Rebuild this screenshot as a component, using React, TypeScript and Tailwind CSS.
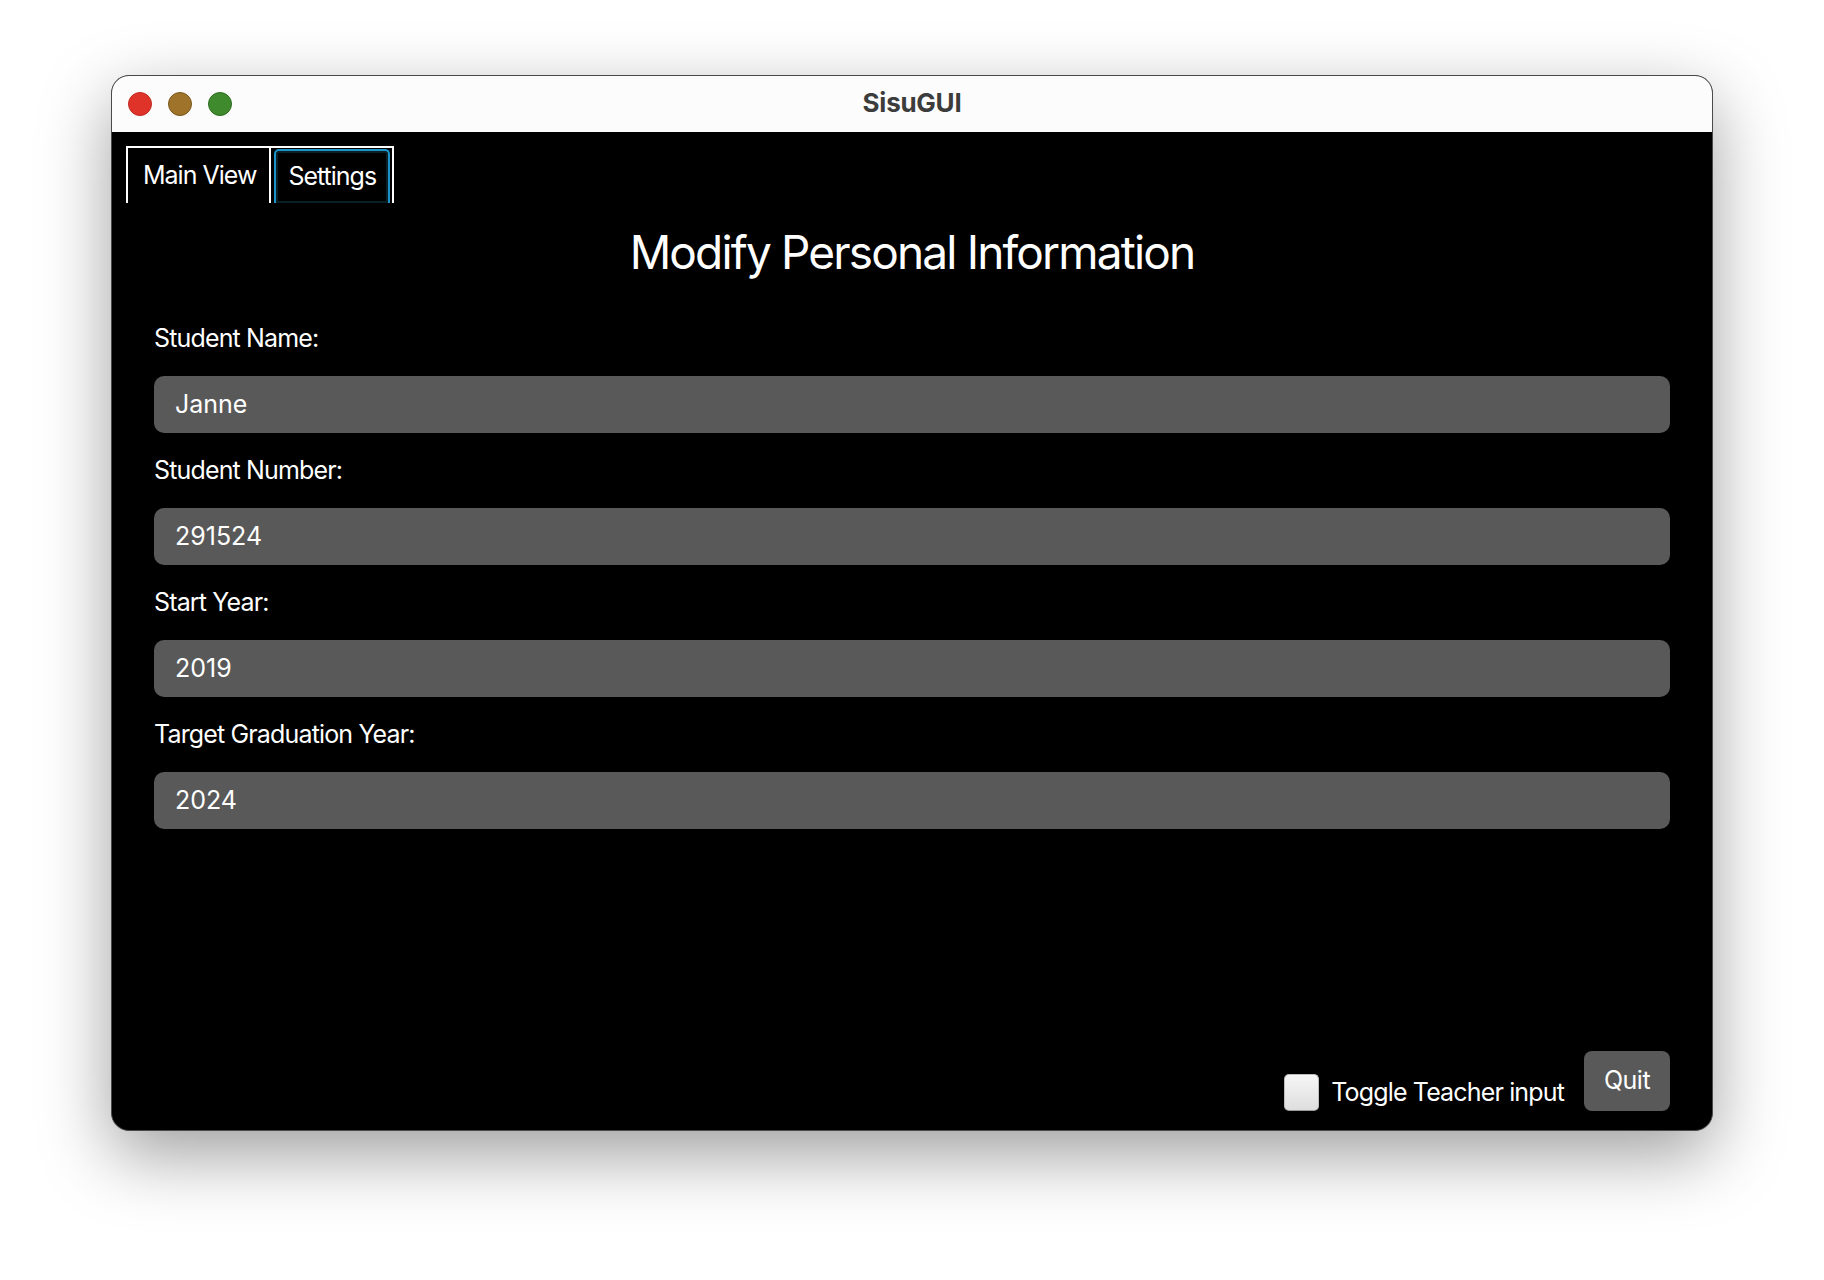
import React from 'react'

const fields = [
  { label: 'Student Name:', value: 'Janne' },
  { label: 'Student Number:', value: '291524' },
  { label: 'Start Year:', value: '2019' },
  { label: 'Target Graduation Year:', value: '2024' },
]

const TrafficLights = () => (
  <div className="flex items-center gap-4">
    <span className="h-6 w-6 rounded-full border border-[#c02a21] bg-[#df3329]" />
    <span className="h-6 w-6 rounded-full border border-[#7a581d] bg-[#9f7329]" />
    <span className="h-6 w-6 rounded-full border border-[#2e6b22] bg-[#3e8a2d]" />
  </div>
)

const App = () => {
  return (
    <div
      className="min-h-screen w-full bg-white pl-[111px] pt-[75px]"
      style={{ fontFamily: 'Inter, "Noto Sans", sans-serif' }}
    >
      <div className="flex h-[1056px] w-[1602px] flex-col overflow-hidden rounded-[18px] border border-[#4a4a4a] bg-black shadow-[0_24px_70px_rgba(0,0,0,0.38)]">
        {/* title bar */}
        <div className="relative flex h-[56px] shrink-0 items-center bg-[#fcfcfc] pl-4">
          <TrafficLights />
          <div className="absolute inset-0 flex items-center justify-center pb-[4px] text-[26px] font-bold tracking-[-0.01em] text-[#3c3c3c]">
            SisuGUI
          </div>
        </div>

        <div className="flex flex-1 flex-col text-white">
          {/* tabs */}
          <div className="ml-[14px] mt-[14px] flex h-[57px] w-fit border-2 border-b-0 border-white">
            <div className="flex items-center border-r-2 border-white pl-[15px] pr-[13px] text-[25px] tracking-[-0.04em]">
              Main View
            </div>
            <div className="ml-[3px] mr-[2px] mt-[1px] flex items-center rounded-t-[5px] border-2 border-b-0 border-[#1b93c9] px-[12px] text-[25px] tracking-[-0.04em] shadow-[inset_0_0_0_2px_#0b1f26]">
              Settings
            </div>
          </div>

          {/* heading */}
          <div className="flex h-[98px] items-center justify-center text-[46px] tracking-[-0.04em]">
            Modify Personal Information
          </div>

          {/* form */}
          <div className="flex flex-col px-[42px]">
            {fields.map((f) => (
              <div key={f.label} className="flex flex-col">
                <div className="flex h-[75px] items-center text-[25px] tracking-[-0.034em]">
                  {f.label}
                </div>
                <div className="flex h-[57px] items-center rounded-[10px] bg-[#595959] pl-[21px] text-[25px] tracking-[0em]">
                  {f.value}
                </div>
              </div>
            ))}
          </div>

          {/* bottom bar */}
          <div className="mt-auto flex items-end justify-end gap-5 px-[42px] pb-[19px]">
            <label className="flex items-center gap-3">
              <span className="h-[37px] w-[35px] rounded-[5px] border border-[#bdbdbd] border-b-[#9a9a9a] bg-gradient-to-b from-[#f6f6f6] to-[#dedede]" />
              <span className="text-[25px] tracking-[-0.034em]">Toggle Teacher input</span>
            </label>
            <button className="flex h-[60px] w-[86px] items-center justify-center rounded-[8px] bg-[#595959] text-[25px] tracking-[-0.02em] text-white">
              Quit
            </button>
          </div>
        </div>
      </div>
    </div>
  )
}

export default App
